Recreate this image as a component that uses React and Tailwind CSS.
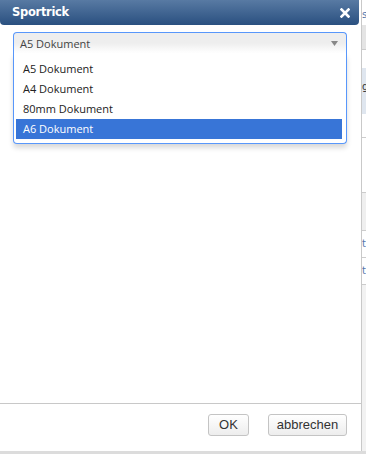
import React from "react";

export default function App() {
  const opts = ["A5 Dokument", "A4 Dokument", "80mm Dokument", "A6 Dokument"];
  return (
    <div className="w-[366px] h-[454px] overflow-hidden bg-[#dcdcdc] flex flex-col" style={{ fontFamily: '"DejaVu Sans", Verdana, sans-serif' }}>
      <div className="flex h-[451px]">
        {/* dialog */}
        <div className="w-[361px] h-full bg-white flex flex-col">
          <div className="w-[359px] h-[25px] rounded-b-[4px] bg-gradient-to-b from-[#587aa3] to-[#2a5080] flex items-center justify-between pl-[12px] pr-[9px] shrink-0">
            <span className="text-white text-[11.5px] font-bold tracking-[-0.3px]">Sportrick</span>
            <svg width="10" height="10" viewBox="0 0 10 10">
              <path d="M1.5 1.5 L8.5 8.5 M8.5 1.5 L1.5 8.5" stroke="white" strokeWidth="2.6" strokeLinecap="square" />
            </svg>
          </div>
          <div className="ml-[13px] mt-[7px] w-[334px]" style={{ fontFamily: '"Open Sans", "DejaVu Sans", sans-serif' }}>
            <div className="h-[21px] border border-[#5897fb] border-b-0 rounded-t-[4px] bg-gradient-to-b from-[#eeeeee] from-50% to-white flex items-center justify-between pl-[6px] pr-[8px]">
              <span className="text-[11px] text-[#444] leading-none">A5 Dokument</span>
              <svg width="7" height="5" viewBox="0 0 7 5"><path d="M0 0 H7 L3.5 5 Z" fill="#888" /></svg>
            </div>
            <div className="border border-[#5897fb] border-t-0 rounded-b-[4px] shadow-[0_4px_5px_rgba(0,0,0,0.15)] bg-white pt-[6px] pb-[4px] pl-[2px] pr-[4px]">
              {opts.map((o, i) => (
                <div key={o} className={`h-[20px] flex items-center pl-[7px] text-[11px] ${i === 3 ? "bg-[#3875d7] text-white" : "text-[#222]"}`}>
                  {o}
                </div>
              ))}
            </div>
          </div>
          <div className="flex-1" />
          <div className="border-t border-[#c8c8c8] h-[48px] flex items-start justify-end gap-[19px] pr-[14px] pt-[10px]" style={{ fontFamily: '"Liberation Sans", Arial, sans-serif' }}>
            <button className="w-[41px] h-[22px] border border-[#c4c4c4] rounded-[3px] bg-gradient-to-b from-white to-[#ededed] text-[13px] text-[#333]">OK</button>
            <button className="w-[79px] h-[22px] border border-[#c4c4c4] rounded-[3px] bg-gradient-to-b from-white to-[#ededed] text-[13px] text-[#333]">abbrechen</button>
          </div>
        </div>
        {/* background page strip */}
        <div className="w-[5px] h-full border-l border-[#c9c9c9] bg-[#f2f2f2] flex flex-col text-[10px] text-[#5577aa] leading-none overflow-hidden">
          <div className="h-[25px] bg-white pt-[10px]">s</div>
          <div className="h-[25px] bg-[#e4e4e4] border-b border-[#ccc]" />
          <div className="h-[18px] bg-white" />
          <div className="h-[46px] bg-[#dfe6ef] pt-[14px] text-[#333]">g</div>
          <div className="h-[24px] bg-white border-b border-[#ccc]" />
          <div className="h-[55px] bg-white border-b border-[#ccc]" />
          <div className="h-[38px] bg-[#efefef] border-b border-[#ccc]" />
          <div className="h-[27px] bg-white border-b border-[#ccc] pt-[8px]">t</div>
          <div className="h-[27px] bg-white border-b border-[#ccc] pt-[8px]">t</div>
          <div className="flex-1 bg-[#f2f2f2]" />
        </div>
      </div>
      <div className="flex-1 bg-[#dcdcdc]" />
    </div>
  );
}
